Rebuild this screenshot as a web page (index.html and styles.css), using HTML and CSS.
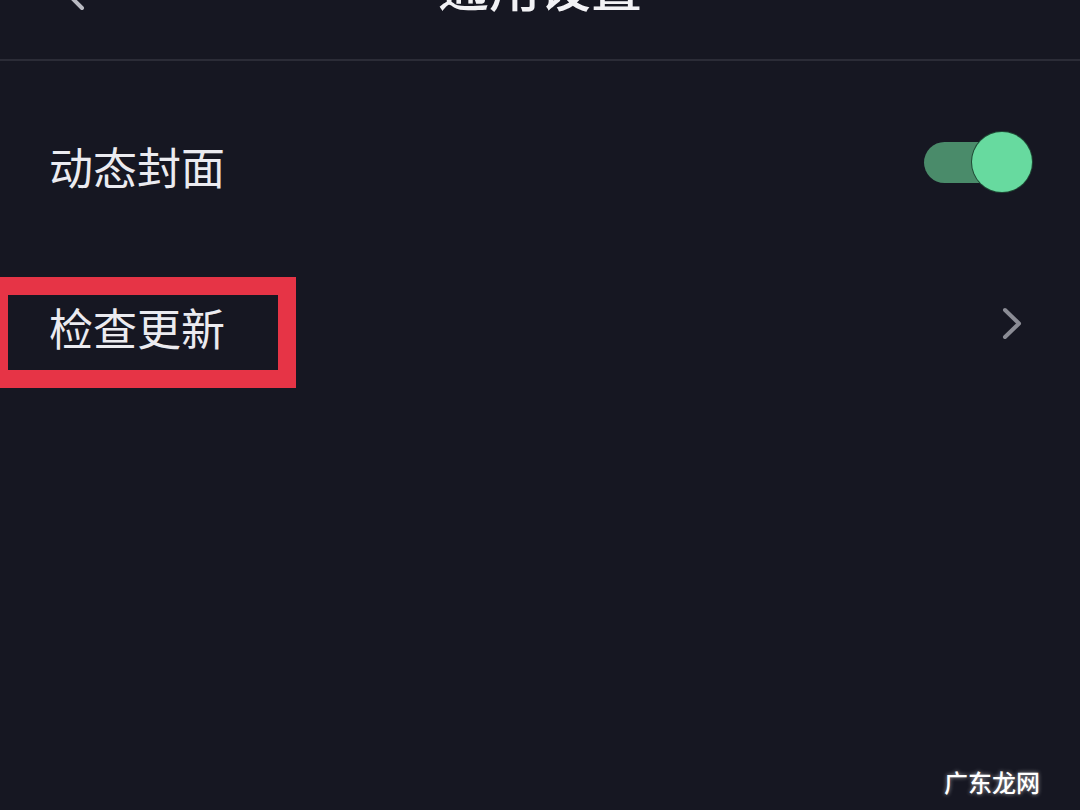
FILE: index.html
```html
<!DOCTYPE html>
<html lang="zh-CN">
<head>
    <meta charset="UTF-8">
    <meta name="viewport" content="width=device-width, initial-scale=1.0">
    <title>通用设置</title>
    <link rel="stylesheet" href="styles.css">
</head>
<body>
    <div class="header">
        <svg class="back" width="40" height="40" viewBox="0 0 40 40">
            <path d="M28 4 L12 20 L28 36" fill="none" stroke="#b9bac2" stroke-width="4" stroke-linecap="round" stroke-linejoin="round"/>
        </svg>
        <div class="title">通用设置</div>
    </div>

    <div class="list">
        <div class="row">
            <div class="label">动态封面</div>
            <div class="switch on">
                <div class="track"></div>
                <div class="knob"></div>
            </div>
        </div>
        <div class="row row-mark">
            <div class="label">检查更新</div>
            <svg class="arrow" width="22" height="34" viewBox="0 0 22 34">
                <path d="M4 3 L18 16.5 L4 30" fill="none" stroke="#8b8c95" stroke-width="4" stroke-linecap="round" stroke-linejoin="round"/>
            </svg>
            <div class="mark"></div>
        </div>
    </div>

    <div class="watermark">广东龙网</div>
</body>
</html>
```

FILE: styles.css
```css
body {
    margin: 0;
    background: #161722;
    color: #ebebf0;
    font-family: "Noto Sans CJK SC", "Noto Sans", sans-serif;
    height: 810px;
    overflow: hidden;
    position: relative;
}
.header {
    height: 59px;
    border-bottom: 2px solid #2b2c37;
    display: flex;
    justify-content: center;
    align-items: flex-start;
    position: relative;
}
.back {
    position: absolute;
    left: 54px;
    top: -28px;
}
.title {
    font-size: 51px;
    line-height: 51px;
    margin-top: -40px;
    font-weight: 500;
    color: #f2f2f5;
}
.list {
    padding-top: 25px;
}
.row {
    height: 161px;
    display: flex;
    align-items: center;
    justify-content: space-between;
    padding: 0 48px 0 49px;
    position: relative;
}
.label {
    font-size: 44px;
    line-height: 44px;
    margin-top: -1px;
}
.switch {
    width: 108px;
    height: 61px;
    position: relative;
    margin-top: -8px;
}
.track {
    position: absolute;
    left: 0;
    top: 10px;
    width: 84px;
    height: 41px;
    border-radius: 21px;
    background: #4a8b6a;
}
.knob {
    position: absolute;
    right: 0;
    top: 0;
    width: 60px;
    height: 60px;
    border-radius: 50%;
    background: #67da9f;
    box-shadow: 0 0 0 1px #1f4a35;
}
.row-mark {
    padding-right: 57px;
}
.arrow {
    margin-top: -8px;
}
.mark {
    position: absolute;
    left: -10px;
    top: 30px;
    width: 270px;
    height: 75px;
    border: 18px solid #e63446;
}
.watermark {
    position: absolute;
    right: 40px;
    bottom: 16px;
    font-size: 24px;
    line-height: 24px;
    font-weight: 500;
    color: #ffffff;
    text-shadow: 0 0 4px rgba(255, 255, 255, 0.6);
}
```
